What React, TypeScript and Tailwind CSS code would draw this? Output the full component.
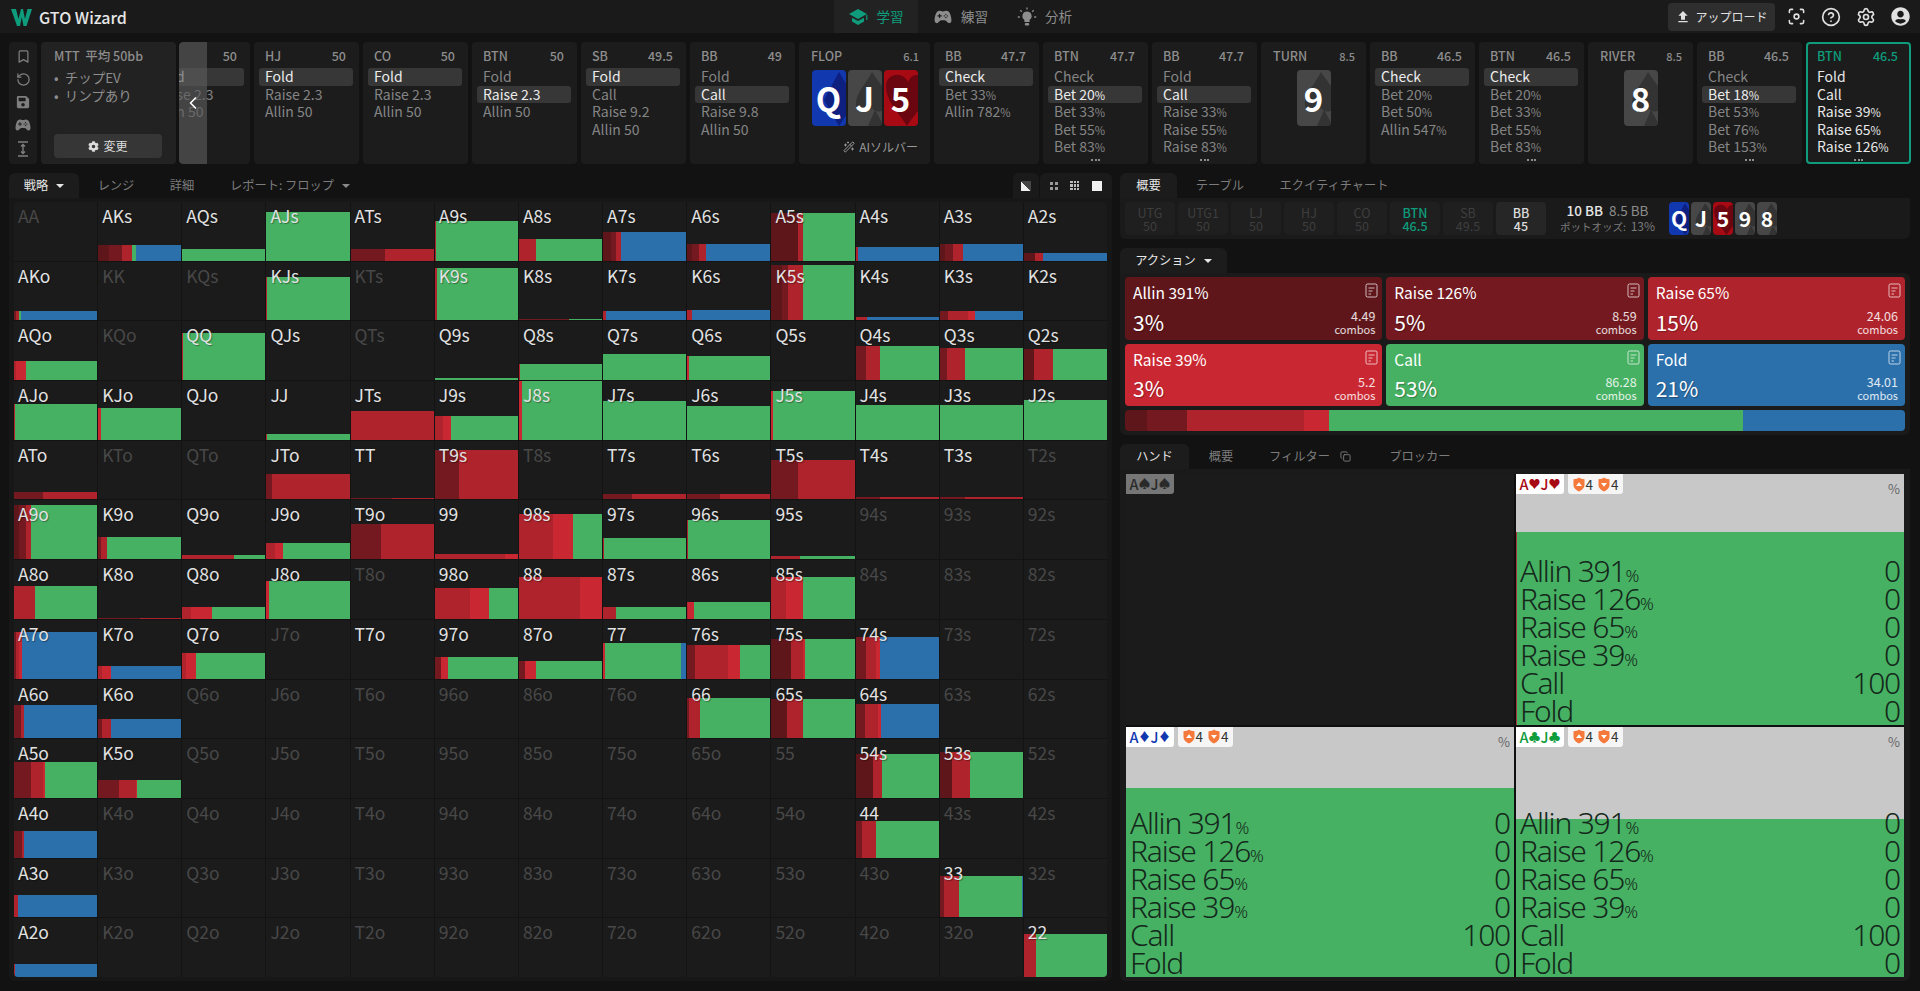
import React from 'react';
import { Bookmark, RotateCcw, ChevronLeft, WandSparkles, Focus, CircleHelp, Settings, Copy } from 'lucide-react';
import { FaSave, FaCog, FaUserCircle } from 'react-icons/fa';
import { IoGameController } from 'react-icons/io5';
import { MdFileUpload } from 'react-icons/md';

const RANKS = 'AKQJT98765432'.split('');

// [height px, allin, raise big, raise mid, raise small, call, fold]
const HANDS: Record<string, number[]> = {
  AKs: [16, 13, 16, 12, 0, 4, 55], AQs: [12, 0, 0, 0, 0, 100, 0], AJs: [49, 0, 0, 0, 0, 100, 0], ATs: [12, 0, 41, 59, 0, 0, 0],
  A9s: [40, 0, 0, 1, 0, 99, 0], A8s: [22, 0, 0, 21, 0, 79, 0], A7s: [29, 10, 6, 6, 0, 0, 78], A6s: [17, 6, 8, 9, 0, 0, 77],
  A5s: [48, 32, 0, 6, 0, 62, 0], A4s: [14, 0, 0, 3, 0, 0, 97], A3s: [17, 6, 10, 12, 0, 0, 72], A2s: [8, 14, 0, 9, 0, 0, 77],
  AKo: [9, 0, 3, 3, 0, 3, 91], KJs: [43, 0, 0, 1, 0, 99, 0], K9s: [52, 0, 0, 2.5, 0, 97.5, 0], K8s: [1, 0, 60, 0, 0, 40, 0],
  K7s: [9, 0, 0, 3, 0, 0, 97], K6s: [10, 0, 0, 6, 0, 0, 94], K5s: [55, 13, 7, 18, 0, 62, 0], K4s: [3, 0, 0, 14, 0, 0, 86],
  K3s: [9, 0, 10, 24, 9, 0, 57], K2s: [0, 0, 0, 0, 0, 0, 0],
  AQo: [19, 0, 0, 3, 12, 85, 0], QQ: [47, 0, 0, 1, 0, 99, 0], QJs: [0, 0, 0, 0, 0, 0, 0], Q9s: [2, 0, 0, 0, 0, 100, 0],
  Q8s: [16, 0, 0, 1, 0, 99, 0], Q7s: [26, 0, 0, 0, 0, 100, 0], Q6s: [24, 0, 0, 0, 2, 98, 0], Q5s: [0, 0, 0, 0, 0, 0, 0],
  Q4s: [34, 0, 12, 17, 0, 71, 0], Q3s: [32, 0, 9, 21, 0, 70, 0], Q2s: [31, 12, 0, 23, 0, 65, 0],
  AJo: [36, 0, 0, 1, 0, 99, 0], KJo: [32, 0, 0, 0, 4, 96, 0], QJo: [0, 0, 0, 0, 0, 0, 0], JJ: [6, 0, 0, 1, 0, 99, 0],
  JTs: [29, 0, 1, 99, 0, 0, 0], J9s: [24, 0, 0, 10, 10, 80, 0], J8s: [59, 0, 0, 0, 4, 96, 0], J7s: [39, 0, 0, 0, 0, 100, 0],
  J6s: [34, 0, 0, 0, 0, 100, 0], J5s: [49, 0, 0, 0, 2, 98, 0], J4s: [35, 0, 0, 0, 0, 100, 0], J3s: [35, 0, 0, 0, 0, 100, 0], J2s: [40, 0, 0, 0, 0, 100, 0],
  ATo: [7, 0, 35, 65, 0, 0, 0], JTo: [25, 0, 7, 93, 0, 0, 0], TT: [1, 0, 50, 50, 0, 0, 0], T9s: [49, 0, 29, 71, 0, 0, 0],
  T7s: [5, 0, 35, 65, 0, 0, 0], T6s: [5, 0, 40, 60, 0, 0, 0], T5s: [39, 0, 32, 68, 0, 0, 0], T4s: [2, 0, 30, 70, 0, 0, 0], T3s: [2, 0, 31, 69, 0, 0, 0],
  A9o: [54, 6, 9, 6, 0, 79, 0], K9o: [22, 0, 4, 7, 0, 89, 0], Q9o: [4, 0, 0, 62, 0, 38, 0], J9o: [16, 0, 0, 10, 10, 80, 0],
  T9o: [35, 0, 37, 63, 0, 0, 0], '99': [5, 0, 0, 84, 16, 0, 0], '98s': [45, 0, 0, 41, 24, 35, 0], '97s': [21, 0, 0, 1, 0, 99, 0],
  '96s': [39, 0, 0, 1, 0, 99, 0], '95s': [3, 0, 0, 35, 0, 65, 0],
  A8o: [33, 0, 0, 25, 0, 75, 0], K8o: [1, 0, 50, 50, 0, 0, 0], Q8o: [12, 0, 0, 11, 25, 64, 0], J8o: [38, 0, 0, 0, 3, 97, 0],
  '98o': [31, 0, 0, 42, 23, 35, 0], '88': [42, 0, 0, 73, 27, 0, 0], '87s': [12, 0, 0, 15, 0, 85, 0], '86s': [17, 0, 0, 1, 7, 92, 0], '85s': [42, 0, 0, 18, 20, 62, 0],
  A7o: [47, 0, 3, 3, 4, 0, 90], K7o: [13, 0, 0, 5, 10, 0, 85], Q7o: [26, 0, 0, 5, 12, 83, 0], T7o: [0, 0, 0, 0, 0, 0, 0],
  '97o': [22, 0, 8, 0, 8, 84, 0], '87o': [18, 0, 7, 0, 14, 79, 0], '77': [36, 0, 0, 0, 2, 92, 6], '76s': [34, 0, 9.5, 39, 15.5, 36, 0],
  '75s': [40, 24, 0, 14, 3, 59, 0], '74s': [42, 0, 12, 13, 4, 0, 71],
  A6o: [33, 0, 8, 4, 0, 0, 88], K6o: [19, 0, 5, 11, 0, 0, 84], '66': [40, 0, 2, 13, 0, 85, 0], '65s': [39, 19, 0, 19, 0, 62, 0], '64s': [34, 0, 11, 16, 4, 0, 69],
  A5o: [36, 0, 20, 15, 2.5, 62.5, 0], K5o: [18, 0, 25, 20, 2, 53, 0], '54s': [44, 21, 0, 11, 0, 68, 0], '53s': [46, 15, 0, 21, 0, 64, 0],
  A4o: [27, 0, 10, 2, 0, 0, 88], '44': [37, 0, 8, 17, 0, 75, 0],
  A3o: [22, 0, 0, 5, 0, 0, 95], '33': [41, 0, 5, 18, 0, 76, 1],
  A2o: [13, 0, 0, 1, 0, 0, 99], '22': [43, 0, 0, 15, 0, 85, 0],
};

const SEG = ['bg-[#5f161b]', 'bg-[#73191f]', 'bg-[#af232c]', 'bg-[#c92832]', 'bg-[#47b163]', 'bg-[#2b70ab]'];

function handName(i: number, j: number) {
  if (i === j) return RANKS[i] + RANKS[j];
  return i < j ? RANKS[i] + RANKS[j] + 's' : RANKS[j] + RANKS[i] + 'o';
}

function Pct({ text }: { text: string }) {
  if (!text.endsWith('%')) return <>{text}</>;
  return (
    <>
      {text.slice(0, -1)}
      <span className="text-[0.8em]">%</span>
    </>
  );
}

function HandCell({ name }: { name: string }) {
  const d = HANDS[name];
  return (
    <div className="relative bg-[#1b1b1b] overflow-hidden">
      {d && d[0] > 0 && (
        <div className="absolute bottom-0 left-0 right-0 flex" style={{ height: d[0] }}>
          {d.slice(1).map((w, k) => w > 0 && <div key={k} className={SEG[k]} style={{ width: w + '%' }} />)}
        </div>
      )}
      <div className={`relative pl-[4px] pt-[2px] text-[17.5px] leading-[24px] ${d ? 'text-[#e2e2e2] [text-shadow:1px_1px_1px_rgba(0,0,0,0.35)]' : 'text-[#484848]'}`}>
        {name}
      </div>
    </div>
  );
}

function Suit({ suit, fill }: { suit: string; fill: string }) {
  return (
    <svg viewBox="0 0 34 56" className="absolute inset-0 w-full h-full" preserveAspectRatio="none">
      {suit === 'd' && <path d="M27 2 L44 30 L27 56 L12 30 Z" fill={fill} />}
      {suit === 's' && (
        <>
          <path d="M24 2 C32 14 40 22 40 32 C40 42 28 44 24 38 C20 44 6 42 8 32 C9 22 18 14 24 2 Z" fill={fill} />
          <path d="M27 40 L36 56 L20 56 Z" fill={fill} />
        </>
      )}
      {suit === 'h' && <path d="M23 56 C16 44 2 32 2 16 C2 4 18 0 24 12 C28 0 44 4 44 18 C44 32 30 44 23 56 Z" fill={fill} />}
    </svg>
  );
}

const CARD_BG: Record<string, string> = { d: 'bg-[#1238b0]', s: 'bg-[#474747]', h: 'bg-[#a80a14]' };
const CARD_FILL: Record<string, string> = { d: '#0d1f7f', s: '#333333', h: '#6b0610' };

function BoardCard({ rank, suit, small }: { rank: string; suit: string; small?: boolean }) {
  return (
    <div className={`relative overflow-hidden flex items-center justify-center rounded-[4px] font-bold text-white ${CARD_BG[suit]} ${small ? 'w-[20px] h-[33px] text-[21px]' : 'w-[34px] h-[56px] text-[33px]'}`}>
      <Suit suit={suit} fill={CARD_FILL[suit]} />
      <span className="relative leading-none">{rank}</span>
    </div>
  );
}

type NodeData = { pos: string; stack: string; acts: string[]; sel?: number; more?: boolean };

const NODES_A: NodeData[] = [
  { pos: 'HJ', stack: '50', acts: ['Fold', 'Raise 2.3', 'Allin 50'], sel: 0 },
  { pos: 'CO', stack: '50', acts: ['Fold', 'Raise 2.3', 'Allin 50'], sel: 0 },
  { pos: 'BTN', stack: '50', acts: ['Fold', 'Raise 2.3', 'Allin 50'], sel: 1 },
  { pos: 'SB', stack: '49.5', acts: ['Fold', 'Call', 'Raise 9.2', 'Allin 50'], sel: 0 },
  { pos: 'BB', stack: '49', acts: ['Fold', 'Call', 'Raise 9.8', 'Allin 50'], sel: 1 },
];
const NODES_B: NodeData[] = [
  { pos: 'BB', stack: '47.7', acts: ['Check', 'Bet 33%', 'Allin 782%'], sel: 0 },
  { pos: 'BTN', stack: '47.7', acts: ['Check', 'Bet 20%', 'Bet 33%', 'Bet 55%', 'Bet 83%'], sel: 1, more: true },
  { pos: 'BB', stack: '47.7', acts: ['Fold', 'Call', 'Raise 33%', 'Raise 55%', 'Raise 83%'], sel: 1, more: true },
];
const NODES_C: NodeData[] = [
  { pos: 'BB', stack: '46.5', acts: ['Check', 'Bet 20%', 'Bet 50%', 'Allin 547%'], sel: 0 },
  { pos: 'BTN', stack: '46.5', acts: ['Check', 'Bet 20%', 'Bet 33%', 'Bet 55%', 'Bet 83%'], sel: 0, more: true },
];
const NODES_D: NodeData[] = [
  { pos: 'BB', stack: '46.5', acts: ['Check', 'Bet 18%', 'Bet 53%', 'Bet 76%', 'Bet 153%'], sel: 1, more: true },
];

function NodeBody({ n, active }: { n: NodeData; active?: boolean }) {
  return (
    <>
      <div className={`flex justify-between pl-[11px] pr-[13px] h-[16px] mt-[6px] text-[12.5px] leading-[16px] font-medium ${active ? 'text-[#0e9c7c]' : 'text-[#8d8d8d]'}`}>
        <span>{n.pos}</span>
        <span>{n.stack}</span>
      </div>
      <div className="mt-[4px] text-[14px]">
        {n.acts.map((a, i) => (
          <div
            key={a}
            className={`h-[17.5px] ml-[5px] mr-[6px] px-[6px] leading-[16px] rounded-[3px] whitespace-nowrap ${i === n.sel ? 'bg-[#373737] text-[#ececec]' : active ? 'text-[#e8e8e8]' : 'text-[#858585]'}`}
          >
            <Pct text={a} />
          </div>
        ))}
      </div>
      {n.more && (
        <div className="absolute bottom-[3px] left-0 right-0 flex justify-center gap-[1.5px]">
          <span className="w-[2px] h-[2px] bg-[#8d8d8d]" />
          <span className="w-[2px] h-[2px] bg-[#8d8d8d]" />
          <span className="w-[2px] h-[2px] bg-[#8d8d8d]" />
        </div>
      )}
    </>
  );
}

function Node({ n, active }: { n: NodeData; active?: boolean }) {
  return (
    <div className={`relative w-[105px] shrink-0 rounded-[4px] bg-[#1c1c1c] overflow-hidden ${active ? 'outline-2 -outline-offset-2 outline-[#0e9c7c]' : ''}`}>
      <NodeBody n={n} active={active} />
    </div>
  );
}

function StreetNode({ name, pot, cards, ai }: { name: string; pot: string; cards: string[]; ai?: boolean }) {
  return (
    <div className={`relative shrink-0 rounded-[4px] bg-[#1c1c1c] ${ai ? 'w-[131px]' : 'w-[105px]'}`}>
      <div className="flex justify-between items-center pl-[12px] pr-[11px] h-[16px] mt-[6px] text-[#8d8d8d] text-[12.5px] font-medium">
        <span>{name}</span>
        <span className="text-[11px]">{pot}</span>
      </div>
      <div className="flex justify-center gap-[2px] mt-[6px]">
        {cards.map((c) => <BoardCard key={c} rank={c[0]} suit={c[1]} />)}
      </div>
      {ai && (
        <div className="absolute bottom-[9px] right-[12px] flex items-center gap-[4px] text-[#9a9a9a] text-[12px] leading-[16px]">
          <WandSparkles size={12} />
          AIソルバー
        </div>
      )}
    </div>
  );
}

function Tab({ label, active, caret, w, children }: { label: string; active?: boolean; caret?: boolean; w: string; children?: React.ReactNode }) {
  return (
    <div className={`h-[25px] flex items-center justify-center gap-[8px] text-[12.25px] rounded-t-[6px] ${w} ${active ? 'bg-[#1c1c1c] text-[#e6e6e6]' : 'text-[#7c7c7c]'}`}>
      {label}
      {children}
      {caret && <span className={`w-0 h-0 border-x-[4px] border-x-transparent border-t-[4px] ${active ? 'border-t-[#e6e6e6]' : 'border-t-[#8a8a8a]'}`} />}
    </div>
  );
}

function NoteIcon() {
  return (
    <svg width="13" height="15" viewBox="0 0 13 15" fill="none" className="absolute top-[6px] right-[4px] text-white/70" stroke="currentColor">
      <rect x="1" y="1" width="11" height="13" rx="1.5" />
      <path d="M3.5 5H9.5M3.5 8H7.5M3.5 11H6" />
    </svg>
  );
}

function ActionCard({ title, pct, combos, bg, h }: { title: string; pct: string; combos: string; bg: string; h: string }) {
  return (
    <div className={`relative rounded-[4px] text-white pl-[8px] pr-[7px] ${bg} ${h}`}>
      <div className="pt-[3px] text-[15.5px] leading-[24px]">{title}</div>
      <NoteIcon />
      <div className="absolute left-[8px] bottom-[3px] text-[21px] leading-[30px] [text-shadow:1px_1px_1px_rgba(0,0,0,0.3)]">{pct}</div>
      <div className="absolute right-[7px] bottom-[4px] text-right text-white/85">
        <div className="text-[12.5px] leading-[14px]">{combos}</div>
        <div className="text-[11px] leading-[13px]">combos</div>
      </div>
    </div>
  );
}

function Shield({ down }: { down?: boolean }) {
  return (
    <svg width="12" height="15" viewBox="0 0 12 15">
      <path d="M0.5 2.2 C3 2.2 4.8 1.6 6 0.5 C7.2 1.6 9 2.2 11.5 2.2 V8 C11.5 11 8.5 13.4 6 14.5 C3.5 13.4 0.5 11 0.5 8 Z" fill="#f4793b" />
      <path d={down ? 'M3 6 H9 L6 9.8 Z' : 'M3 9 H9 L6 5.2 Z'} fill="#fff" />
    </svg>
  );
}

const HAND_ROWS = [['Allin 391', '0'], ['Raise 126', '0'], ['Raise 65', '0'], ['Raise 39', '0'], ['Call', '100'], ['Fold', '0']];

function ComboTag({ a, b, suit, cls }: { a: string; b: string; suit: string; cls: string }) {
  return (
    <div className={`h-[20px] w-[48px] flex items-center justify-center rounded-br-[3px] text-[14.5px] font-medium ${cls}`}>
      {a}<span className="text-[12px]">{suit}</span>{b}<span className="text-[12px]">{suit}</span>
    </div>
  );
}

function ComboCell({ suit, cls, grey, edge }: { suit: string; cls: string; grey: number; edge?: boolean }) {
  return (
    <div className="relative flex flex-col bg-[#47b163]">
      <div className="bg-[#c8c8c8]" style={{ height: grey }} />
      {edge && <div className="absolute left-0 bottom-0 w-px bg-[#a9353f]" style={{ top: grey }} />}
      <div className="absolute top-0 left-0 flex gap-[4px]">
        <ComboTag a="A" b="J" suit={suit} cls={'bg-white ' + cls} />
        <div className="h-[20px] w-[55px] flex items-center justify-center gap-[1px] rounded-b-[3px] bg-[#f5f5f5] text-[#333] text-[13.5px]">
          <Shield />4<span className="w-[3px]" /><Shield down />4
        </div>
      </div>
      <div className="absolute top-[5px] right-[4px] text-[#666] text-[13px] leading-[20px]">%</div>
      <div className="absolute bottom-0 left-[4px] right-[4px] text-[#14281b] text-[30px] leading-[28px] tracking-[-1.2px] font-light font-['Noto_Sans',sans-serif]">
        {HAND_ROWS.map(([a, v]) => (
          <div key={a} className="flex justify-between h-[28px]">
            <span>{a}{a.includes(' ') && <span className="text-[17px] leading-none tracking-normal">%</span>}</span>
            <span>{v}</span>
          </div>
        ))}
      </div>
    </div>
  );
}

function PosTile({ pos, stack, tone }: { pos: string; stack: string; tone?: string }) {
  const c = tone === 'btn' ? 'text-[#0e9c7c] bg-[#1f1f1f] font-medium' : tone === 'bb' ? 'text-[#dcdcdc] bg-[#262626] font-medium' : 'text-[#3e3e3e] bg-[#1f1f1f]';
  return (
    <div className={`w-[50px] h-[33px] rounded-[4px] flex flex-col items-center justify-center text-[12.5px] leading-[13px] ${c}`}>
      <span>{pos}</span>
      <span>{stack}</span>
    </div>
  );
}

export default function App() {
  return (
    <div className="w-full h-[991px] overflow-hidden bg-[#121212] font-['Noto_Sans_CJK_JP','Noto_Sans',sans-serif]">
      {/* top bar */}
      <header className="relative h-[33px] bg-[#1a1a1a] flex items-center justify-between pl-[11px] pr-[10px]">
        <div className="flex items-center gap-[7px]">
          <svg width="21" height="18" viewBox="0 0 21 18" fill="#0e9c7c">
            <path d="M0 1 H5 L7.5 11 L10 1 H12 L14 11 L16.5 1 H21 L15.5 18 H12.5 L10.7 9 L9 18 H6 Z" />
          </svg>
          <span className="text-[#e6e6e6] text-[16px] font-medium">GTO Wizard</span>
        </div>
        <nav className="absolute left-[834px] top-0 h-[33px] flex items-center text-[#8d8d8d] text-[13.5px]">
          <div className="h-[33px] w-[84px] bg-[#222222] flex items-center justify-center gap-[9px] text-[#0e9c7c]">
            <svg width="19" height="18" viewBox="0 0 19 18" fill="currentColor">
              <path d="M9 1 L18 6 L9 11 L0 6 Z" />
              <path d="M3 9.8 L9 13.1 L15 9.8 V13.6 L9 17 L3 13.6 Z" />
              <path d="M17.2 7 H18.4 V12 H17.2 Z" />
            </svg>
            学習
          </div>
          <div className="ml-[16px] flex items-center gap-[9px]">
            <IoGameController size={18} />
            練習
          </div>
          <div className="ml-[29px] flex items-center gap-[8px]">
            <svg width="20" height="20" viewBox="0 0 20 20" fill="currentColor" stroke="currentColor">
              <path d="M10 4.5a4.6 4.6 0 0 0-2.6 8.4V15h5.2v-2.1A4.6 4.6 0 0 0 10 4.5Z" stroke="none" />
              <rect x="7.8" y="16" width="4.4" height="2.4" rx="1" stroke="none" />
              <path d="M10 .5V2.5M3.3 3.3 4.8 4.8M16.7 3.3 15.2 4.8M.8 10H2.8M17.2 10H19.2" strokeWidth="1.3" />
            </svg>
            分析
          </div>
        </nav>
        <div className="flex items-center text-[#e0e0e0]">
          <div className="h-[28px] w-[107px] rounded-[4px] bg-[#2e2e2e] flex items-center justify-center gap-[4px] text-[12px]">
            <MdFileUpload size={16} />
            アップロード
          </div>
          <Focus size={19} className="ml-[12px]" />
          <CircleHelp size={20} className="ml-[15px]" />
          <Settings size={20} className="ml-[15px]" />
          <FaUserCircle size={19} className="ml-[15px]" />
        </div>
      </header>

      {/* line of play */}
      <section className="mt-[9px] h-[122px] px-[9px] flex gap-[4px]">
        <div className="w-[28px] shrink-0 rounded-[4px] bg-[#1c1c1c] flex flex-col items-center justify-between py-[7px] text-[#7f7f7f]">
          <Bookmark size={15} />
          <RotateCcw size={15} />
          <FaSave size={14} />
          <IoGameController size={16} />
          <svg width="14" height="16" viewBox="0 0 14 16" fill="none" stroke="currentColor" strokeWidth="1.4">
            <path d="M2 1H12M2 15H12M7 3.5V12.5M5 5.5 7 3.5 9 5.5M5 10.5 7 12.5 9 10.5" />
          </svg>
        </div>
        <div className="relative w-[135px] shrink-0 rounded-[4px] bg-[#222222] text-[#8d8d8d] pl-[13px]">
          <div className="mt-[6px] h-[16px] text-[12.5px] leading-[16px] font-medium">MTT&nbsp;&nbsp;平均 50bb</div>
          <div className="mt-[4px] text-[13.5px] leading-[18px]">
            <div>•&nbsp;&nbsp;チップEV</div>
            <div>•&nbsp;&nbsp;リンプあり</div>
          </div>
          <div className="absolute left-[13px] bottom-[6px] w-[108px] h-[24px] rounded-[4px] bg-[#363636] flex items-center justify-center gap-[4px] text-[#dcdcdc] text-[12px]">
            <FaCog size={11} />
            変更
          </div>
        </div>
        <div className="relative -ml-px w-[71px] shrink-0 rounded-[4px] bg-[#1c1c1c] overflow-hidden">
          <div className="relative -ml-[34px] w-[105px]">
            <NodeBody n={{ pos: 'LJ', stack: '50', acts: ['Fold', 'Raise 2.3', 'Allin 50'], sel: 0 }} />
          </div>
          <div className="absolute top-0 bottom-0 left-0 w-[28px] rounded-l-[4px] bg-[#5a5a5a]/65 flex items-center justify-center text-white">
            <ChevronLeft size={20} />
          </div>
        </div>
        {NODES_A.map((n, i) => <Node key={i} n={n} />)}
        <StreetNode name="FLOP" pot="6.1" cards={['Qd', 'Js', '5h']} ai />
        {NODES_B.map((n, i) => <Node key={i} n={n} />)}
        <StreetNode name="TURN" pot="8.5" cards={['9s']} />
        {NODES_C.map((n, i) => <Node key={i} n={n} />)}
        <StreetNode name="RIVER" pot="8.5" cards={['8s']} />
        {NODES_D.map((n, i) => <Node key={i} n={n} />)}
        <Node active n={{ pos: 'BTN', stack: '46.5', acts: ['Fold', 'Call', 'Raise 39%', 'Raise 65%', 'Raise 126%'], more: true }} />
      </section>

      <main className="mt-[9px] pl-[9px] flex gap-[8px]">
        {/* strategy grid */}
        <div className="w-[1103px] shrink-0">
          <div className="h-[25px] flex items-center">
            <Tab label="戦略" active caret w="w-[70px]" />
            <Tab label="レンジ" w="w-[74px]" />
            <Tab label="詳細" w="w-[58px]" />
            <Tab label="レポート: フロップ" caret w="w-[124px] ml-[17px]" />
            <div className="ml-auto flex gap-[1px] h-[25px]">
              <div className="w-[26px] bg-[#1a1a1a] rounded-t-[6px] flex items-center justify-center">
                <div className="w-[10px] h-[10px] bg-[linear-gradient(45deg,#f0f0f0_50%,#444_50%)]" />
              </div>
              <div className="w-[72px] bg-[#1a1a1a] rounded-t-[6px] flex items-center justify-around px-[4px]">
                <div className="w-[8px] h-[8px] grid grid-cols-2 gap-[2px]">
                  <span className="bg-[#999]" /><span className="bg-[#999]" /><span className="bg-[#999]" /><span className="bg-[#999]" />
                </div>
                <div className="w-[9px] h-[9px] grid grid-cols-3 gap-[1px]">
                  {[0, 1, 2, 3, 4, 5, 6, 7, 8].map((i) => <span key={i} className="bg-[#bbb]" />)}
                </div>
                <div className="w-[10px] h-[10px] bg-[#f0f0f0]" />
              </div>
            </div>
          </div>
          <div className="h-[783px] bg-[#171717] rounded-b-[6px] px-[5px] pt-[4px]">
            <div className="h-[775px] grid grid-cols-[repeat(13,minmax(0,1fr))] grid-rows-[repeat(13,minmax(0,1fr))] gap-px bg-[#131313] rounded-[4px] overflow-hidden">
              {RANKS.map((_, i) => RANKS.map((_, j) => <HandCell key={i + '-' + j} name={handName(i, j)} />))}
            </div>
          </div>
        </div>

        {/* right side */}
        <div className="w-[790px] shrink-0">
          <div className="flex h-[25px]">
            <Tab label="概要" active w="w-[57px]" />
            <Tab label="テーブル" w="w-[86px]" />
            <Tab label="エクイティチャート" w="w-[140px] ml-[1px]" />
          </div>
          <div className="h-[41px] bg-[#1a1a1a] rounded-b-[6px] flex items-center pl-[5px] gap-[3px]">
            <PosTile pos="UTG" stack="50" />
            <PosTile pos="UTG1" stack="50" />
            <PosTile pos="LJ" stack="50" />
            <PosTile pos="HJ" stack="50" />
            <PosTile pos="CO" stack="50" />
            <PosTile pos="BTN" stack="46.5" tone="btn" />
            <PosTile pos="SB" stack="49.5" />
            <PosTile pos="BB" stack="45" tone="bb" />
            <div className="w-[117px] flex flex-col items-center">
              <div className="text-[13.5px] leading-[15px] text-[#8d8d8d]">
                <span className="text-[#e6e6e6] font-medium">10 BB</span>&nbsp; 8.5 BB
              </div>
              <div className="text-[10.5px] leading-[16px] text-[#7c7c7c]">
                ポットオッズ:&nbsp; <span className="text-[12px]">13%</span>
              </div>
            </div>
            <div className="flex gap-[2px]">
              <BoardCard rank="Q" suit="d" small />
              <BoardCard rank="J" suit="s" small />
              <BoardCard rank="5" suit="h" small />
              <BoardCard rank="9" suit="s" small />
              <BoardCard rank="8" suit="s" small />
            </div>
          </div>

          <div className="mt-[9px] h-[25px] flex">
            <Tab label="アクション" active caret w="w-[107px]" />
          </div>
          <div className="h-[162px] bg-[#1a1a1a] rounded-[6px] rounded-tl-none px-[5px] pt-[4px]">
            <div className="grid grid-cols-3 gap-[4px]">
              <ActionCard title="Allin 391%" pct="3%" combos="4.49" bg="bg-[#5f161b]" h="h-[63px]" />
              <ActionCard title="Raise 126%" pct="5%" combos="8.59" bg="bg-[#73191f]" h="h-[63px]" />
              <ActionCard title="Raise 65%" pct="15%" combos="24.06" bg="bg-[#af232c]" h="h-[63px]" />
              <ActionCard title="Raise 39%" pct="3%" combos="5.2" bg="bg-[#c92832]" h="h-[62px]" />
              <ActionCard title="Call" pct="53%" combos="86.28" bg="bg-[#47b163]" h="h-[62px]" />
              <ActionCard title="Fold" pct="21%" combos="34.01" bg="bg-[#2b70ab]" h="h-[62px]" />
            </div>
            <div className="mt-[4px] h-[21px] rounded-[4px] overflow-hidden flex">
              <div className="w-[2.8%] bg-[#5f161b]" />
              <div className="w-[5.2%] bg-[#73191f]" />
              <div className="w-[15%] bg-[#af232c]" />
              <div className="w-[3.2%] bg-[#c92832]" />
              <div className="w-[53%] bg-[#47b163]" />
              <div className="w-[20.8%] bg-[#2b70ab]" />
            </div>
          </div>

          <div className="mt-[9px] h-[25px] flex">
            <Tab label="ハンド" active w="w-[69px]" />
            <Tab label="概要" w="w-[64px]" />
            <Tab label="フィルター" w="w-[112px] ml-[1px]">
              <Copy size={11} className="ml-[2px]" />
            </Tab>
            <Tab label="ブロッカー" w="w-[90px] ml-[9px]" />
          </div>
          <div className="h-[512px] bg-[#1a1a1a] rounded-b-[6px] px-[6px] pt-[5px]">
            <div className="h-[503px] grid grid-cols-2 grid-rows-2 gap-[2px] bg-[#0f0f0f]">
              <div className="relative bg-[#1b1b1b]">
                <ComboTag a="A" b="J" suit="♠" cls="bg-[#767676] text-[#2a2a2a]" />
              </div>
              <ComboCell suit="♥" cls="text-[#a80a14]" grey={58} edge />
              <ComboCell suit="♦" cls="text-[#1238b0]" grey={61} />
              <ComboCell suit="♣" cls="text-[#0e9c3c]" grey={92} />
            </div>
          </div>
        </div>
      </main>
    </div>
  );
}
